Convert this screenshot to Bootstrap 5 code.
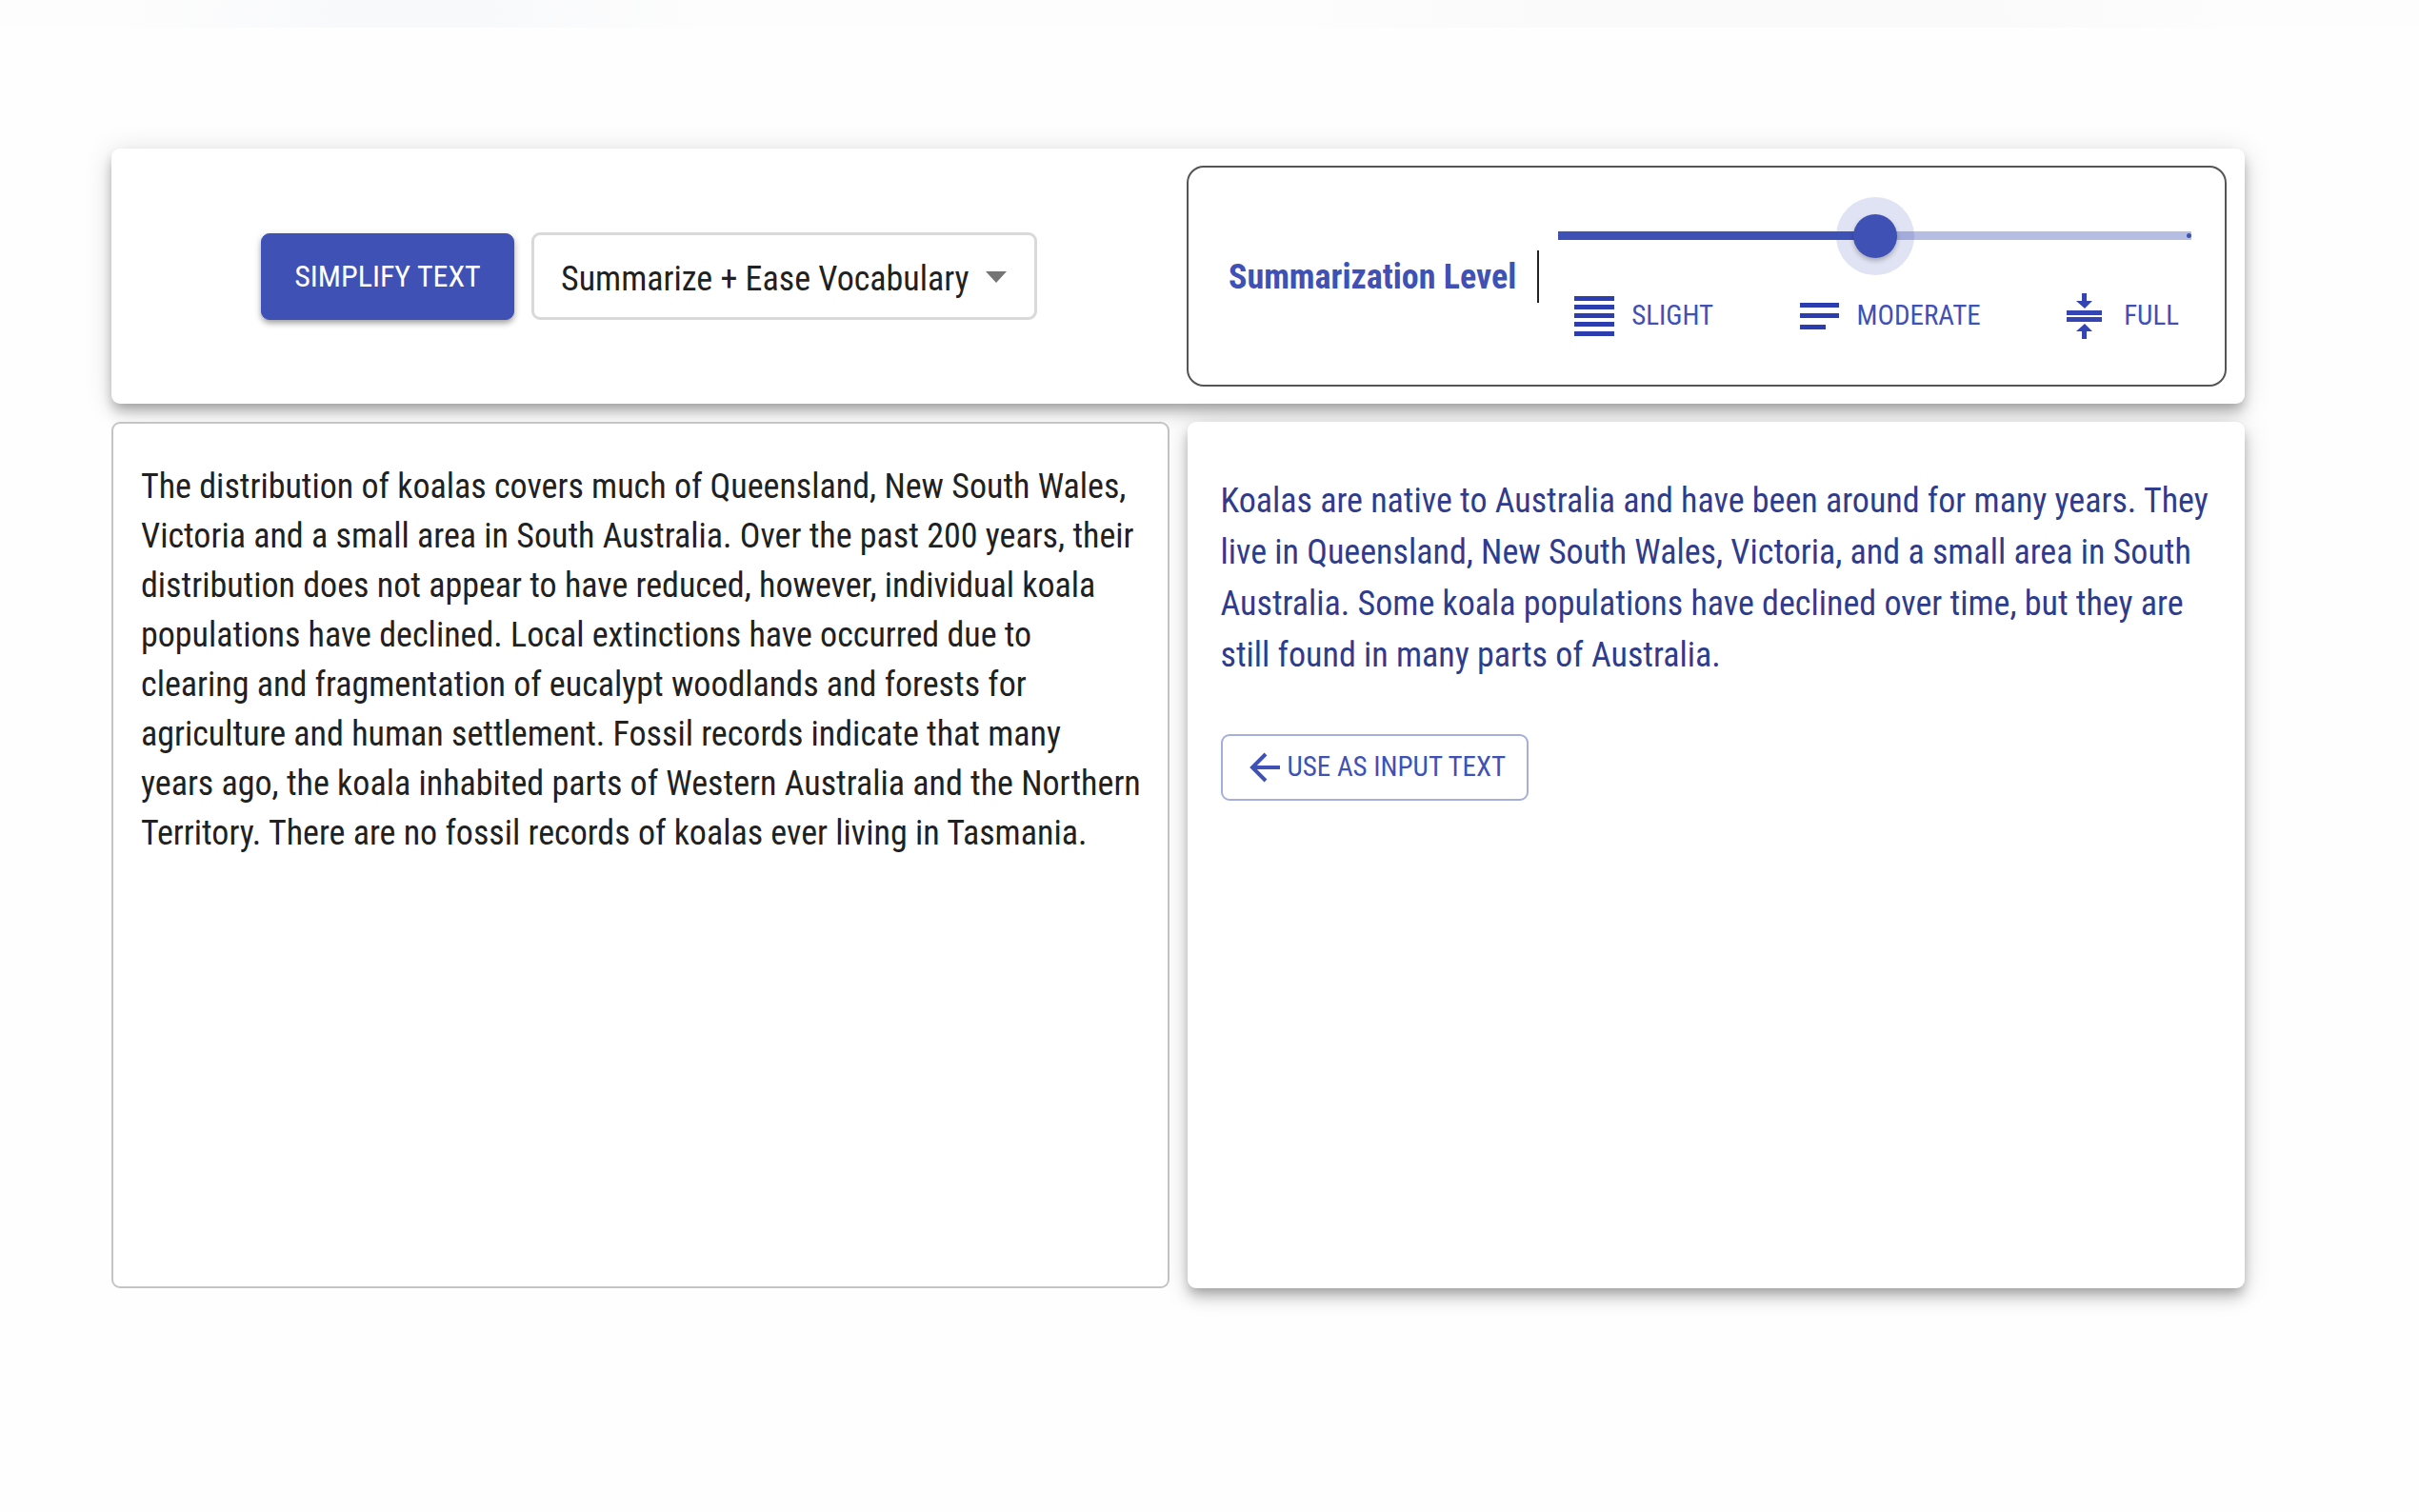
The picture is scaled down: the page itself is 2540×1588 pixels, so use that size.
<!DOCTYPE html>
<html lang="en">
<head>
<meta charset="utf-8">
<meta name="viewport" content="width=device-width, initial-scale=1">
<title>Text Simplifier</title>
<link href="https://cdn.jsdelivr.net/npm/bootstrap@5.3.0/dist/css/bootstrap.min.css" rel="stylesheet">
<style>
:root { --indigo: #3f51b5; --sheet-shadow: 0 6px 12px -3px rgba(0,0,0,.24), 0 11px 15px rgba(0,0,0,.14), 0 3px 30px rgba(0,0,0,.13); }
body { font-family: "Roboto Condensed", Roboto, sans-serif; font-size: 36px; background: #fefefe; color: #212121; }
.top-strip { height: 29px; background: radial-gradient(ellipse 300px 100px at 17% 50%, #f8f9fb 20%, transparent), radial-gradient(ellipse 480px 160px at 73% 50%, #fafafa 50%, transparent), #fdfdfd; }
.page-main { padding: 127px 183px 60px 117px; }
.sheet { background: #fff; border-radius: 9px; box-shadow: var(--sheet-shadow); }
.toolbar-sheet { padding: 18px 19px 18px 0; margin-bottom: 19px; }
.action-group { gap: 18px; }
.main-action { --bs-btn-font-size: 32px; --bs-btn-padding-x: 0px; --bs-btn-border-radius: 9px; --bs-btn-bg: var(--indigo); --bs-btn-color: #fff; --bs-btn-border-color: var(--indigo); --bs-btn-hover-bg: #303f9f; --bs-btn-hover-color: #fff; width: 266px; height: 91px; box-shadow: 0 4px 6px -1px rgba(0,0,0,.3), 0 2px 8px rgba(0,0,0,.16); }
.mode-wrap { width: 531px; }
.mode-select { appearance: none; width: 100%; height: 92px; padding: 5px 66px 0 28px; border: 3px solid #d9d9d9; border-radius: 9px; background: #fff; color: #212121; }
.mode-arrow { right: 32px; top: 41px; pointer-events: none; }
.level-box { width: 1092px; height: 232px; padding: 0 35px 0 42px; border: 2px solid #555; border-radius: 18px; }
.level-label { color: var(--indigo); font-weight: 700; padding-top: 2px; margin-right: 22px; }
.level-rule { width: 2px; height: 55px; background: #222; margin-right: 20px; }
.level-column { gap: 37px; }
.level-range { appearance: none; display: block; width: 100%; height: 46px; background: linear-gradient(to right, var(--indigo) 50%, #b5bde3 50%) center / 100% 9px no-repeat; }
.level-range::-webkit-slider-thumb { appearance: none; width: 46px; height: 46px; border: 0; border-radius: 50%; background: var(--indigo); box-shadow: 0 3px 5px rgba(0,0,0,.25), 0 0 0 18px rgba(63,81,181,.16); }
.level-range::-moz-range-thumb { width: 46px; height: 46px; border: 0; border-radius: 50%; background: var(--indigo); box-shadow: 0 0 0 18px rgba(63,81,181,.16); }
.range-end { right: 0; top: 20px; width: 5px; height: 5px; border-radius: 50%; background: var(--indigo); pointer-events: none; }
.level-steps { padding: 0 13px 0 17px; }
.step-btn { --bs-btn-font-size: 29px; --bs-btn-padding-x: 0px; --bs-btn-padding-y: 0px; --bs-btn-color: var(--indigo); --bs-btn-hover-color: #303f9f; --bs-btn-border-width: 0; height: 48px; gap: 18px; }
.panels { display: grid; grid-template-columns: repeat(2, minmax(0, 1fr)); gap: 19px; }
.panel-half { min-height: 910px; }
.input-text { display: block; resize: none; padding: 40px 23px 30px 29px; border: 2px solid #c4c4c4; border-radius: 9px; background: rgba(255,255,255,.85); color: #212121; line-height: 52px; outline: 0; overflow: hidden; }
.result-sheet { padding: 56px 24px 56px 35px; color: #2f3c8c; line-height: 54px; }
.result-text { margin-bottom: 56px; }
.reuse-btn { --bs-btn-font-size: 29px; --bs-btn-border-radius: 9px; --bs-btn-border-width: 2px; --bs-btn-color: var(--indigo); --bs-btn-border-color: #a5aedd; --bs-btn-hover-color: #303f9f; --bs-btn-hover-border-color: var(--indigo); --bs-btn-padding-x: 22px; height: 70px; gap: 2px; }
</style>
</head>
<body>
<div class="top-strip"></div>
<main class="page-main">
  <section class="sheet toolbar-sheet d-flex align-items-center">
    <div class="action-group flex-grow-1 d-flex justify-content-center align-items-center">
      <button type="button" class="btn main-action">SIMPLIFY TEXT</button>
      <div class="mode-wrap position-relative">
        <select class="mode-select" aria-label="Simplification mode">
          <option>Summarize + Ease Vocabulary</option>
        </select>
        <svg class="mode-arrow position-absolute" width="22" height="12" viewBox="0 0 22 12" aria-hidden="true"><path d="M0 0h22L11 12z" fill="#757575"/></svg>
      </div>
    </div>
    <div class="level-box d-flex align-items-center">
      <label class="level-label text-nowrap" for="level">Summarization Level</label>
      <div class="level-rule"></div>
      <div class="level-column flex-grow-1 d-flex flex-column">
        <div class="position-relative">
          <input class="level-range" type="range" id="level" min="1" max="3" value="2">
          <span class="range-end position-absolute"></span>
        </div>
        <div class="level-steps d-flex justify-content-between">
          <button type="button" class="btn step-btn d-flex align-items-center">
            <svg width="42" height="42" viewBox="0 0 42 42" fill="#2c3db0" aria-hidden="true"><path d="M0 0h42v5H0zM0 9h42v5H0zM0 18h42v5H0zM0 27h42v5H0zM0 37h42v5H0z"/></svg>
            SLIGHT
          </button>
          <button type="button" class="btn step-btn d-flex align-items-center">
            <svg width="42" height="28" viewBox="0 0 42 28" fill="#2c3db0" aria-hidden="true"><path d="M0 0h41v5H0zM0 11h41v5H0zM0 23h27v5H0z"/></svg>
            MODERATE
          </button>
          <button type="button" class="btn step-btn d-flex align-items-center">
            <svg class="me-1" width="38" height="48" viewBox="0 0 38 48" fill="#3445b3" aria-hidden="true"><path d="M0 18h37v5H0zM0 25h37v5H0zM16 0h5v8h6l-8 8-9-8h6zM16 48h5v-8h6l-8-8-9 8h6z"/></svg>
            FULL
          </button>
        </div>
      </div>
    </div>
  </section>
  <section class="panels">
    <textarea class="input-text panel-half" aria-label="Input text" spellcheck="false">The distribution of koalas covers much of Queensland, New South Wales, Victoria and a small area in South Australia. Over the past 200 years, their distribution does not appear to have reduced, however, individual koala populations have declined. Local extinctions have occurred due to clearing and fragmentation of eucalypt woodlands and forests for agriculture and human settlement. Fossil records indicate that many
years ago, the koala inhabited parts of Western Australia and the Northern Territory. There are no fossil records of koalas ever living in Tasmania.</textarea>
    <div class="sheet result-sheet panel-half">
      <p class="result-text">Koalas are native to Australia and have been around for many years. They live in Queensland, New South Wales, Victoria, and a small area in South Australia. Some koala populations have declined over time, but they are still found in many parts of Australia.</p>
      <button type="button" class="btn reuse-btn d-flex align-items-center">
        <svg width="44" height="44" viewBox="0 0 44 44" fill="none" stroke="#3f51b5" stroke-width="4" aria-hidden="true"><path d="M38 22H9M23 8L9 22l14 14"/></svg>
        USE AS INPUT TEXT
      </button>
    </div>
  </section>
</main>
<script src="https://cdn.jsdelivr.net/npm/bootstrap@5.3.0/dist/js/bootstrap.bundle.min.js"></script>
</body>
</html>
